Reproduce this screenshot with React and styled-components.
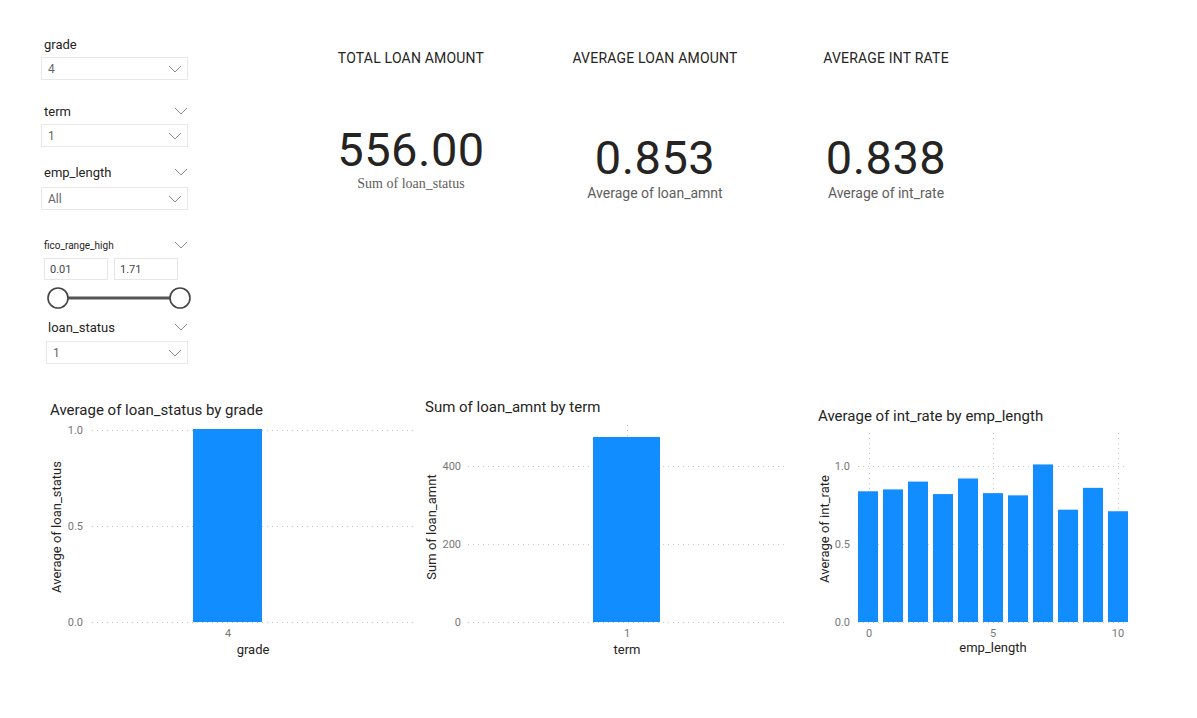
import React from 'react';
import styled, { createGlobalStyle } from 'styled-components';

const GlobalStyle = createGlobalStyle`
  body {
    margin: 0;
    background: #ffffff;
    font-family: Roboto, "Liberation Sans", sans-serif;
    color: #252423;
  }
`;

const Page = styled.div`
  width: 1197px;
  height: 718px;
  background: #ffffff;
  overflow: hidden;
`;

const TopSection = styled.div`
  display: flex;
  align-items: flex-start;
  height: 398px;
`;

const SlicerColumn = styled.div`
  display: flex;
  flex-direction: column;
  width: 150px;
  margin-left: 41px;
  padding-top: 35px;
`;

const SlicerGroup = styled.div`
  display: flex;
  flex-direction: column;
  margin-top: ${(p) => p.$gap || 0}px;
  padding-left: ${(p) => p.$indent || 0}px;
`;

const SlicerHeader = styled.div`
  display: flex;
  align-items: center;
  justify-content: space-between;
  height: 18px;
  padding-left: ${(p) => p.$pad ?? 3}px;
  padding-right: 3px;
  margin-bottom: ${(p) => p.$below ?? 4}px;
`;

const SlicerLabel = styled.span`
  font-size: ${(p) => (p.$small ? 10 : 13)}px;
  color: #252423;
`;

const Dropdown = styled.div`
  display: flex;
  align-items: center;
  justify-content: space-between;
  box-sizing: border-box;
  height: 23px;
  width: ${(p) => p.$width || 147}px;
  border: 1px solid #e8e8e8;
  padding: 0 5px 0 6px;
  font-size: 12px;
  color: #666666;
`;

const RangeInputs = styled.div`
  display: flex;
  gap: 6px;
  padding-left: 3px;
`;

const RangeBox = styled.div`
  box-sizing: border-box;
  width: 64px;
  height: 22px;
  border: 1px solid #e6e6e6;
  padding: 0 5px;
  display: flex;
  align-items: center;
  font-size: 11px;
  color: #444444;
`;

const SliderWrap = styled.div`
  margin-top: 6px;
  padding-left: 6px;
  height: 24px;
`;

const Cards = styled.div`
  display: grid;
  grid-template-columns: 244px 244px 218px;
  margin-left: 98px;
  padding-top: 48px;
`;

const Card = styled.div`
  display: flex;
  flex-direction: column;
  align-items: center;
`;

const CardTitle = styled.div`
  font-size: 14px;
  font-weight: 400;
  letter-spacing: 0.2px;
  line-height: 20px;
  color: #252423;
`;

const CardValue = styled.div`
  margin-top: ${(p) => (p.$wide ? 57 : 65)}px;
  font-size: 47px;
  line-height: 50px;
  letter-spacing: 0.5px;
  color: #252423;
  font-weight: 400;
`;

const CardSub = styled.div`
  margin-top: ${(p) => (p.$serif ? 0 : 1)}px;
  font-family: ${(p) => (p.$serif ? '"Liberation Serif", serif' : 'Roboto, "Liberation Sans", sans-serif')};
  font-size: 14px;
  line-height: 18px;
  color: #605e5c;
`;

const ChartsRow = styled.div`
  display: flex;
  align-items: flex-end;
  margin-left: 45px;
  height: 262px;
`;

const ChartPanel = styled.div`
  display: flex;
  flex-direction: column;
  width: ${(p) => p.$width}px;
`;

const ChartTitle = styled.div`
  font-size: 15px;
  line-height: 20px;
  color: #252423;
  padding-left: ${(p) => p.$indent || 0}px;
  white-space: nowrap;
`;

const BLUE = '#118dff';
const GRID = '#c8c6c4';
const TICK = '#777777';

const Chevron = ({ color = '#8a8a8a' }) => (
  <svg width="14" height="8" viewBox="0 0 14 8">
    <path d="M1 1 L7 7 L13 1" fill="none" stroke={color} strokeWidth="1" />
  </svg>
);

const Slider = () => (
  <svg width="146" height="24" viewBox="0 0 146 24">
    <line x1="11" y1="12" x2="133" y2="12" stroke="#555" strokeWidth="3" />
    <circle cx="11" cy="12" r="10" fill="#fff" stroke="#444" strokeWidth="1.6" />
    <circle cx="133" cy="12" r="10" fill="#fff" stroke="#444" strokeWidth="1.6" />
  </svg>
);

const tickStyle = { fontFamily: 'Roboto, sans-serif', fontSize: 11, fill: TICK };
const axisStyle = { fontFamily: 'Roboto, sans-serif', fontSize: 13, fill: '#252423' };

const HGrid = ({ y, x1, x2 }) => (
  <line x1={x1} y1={y} x2={x2} y2={y} stroke={GRID} strokeWidth="1" strokeDasharray="1 4" />
);

const VGrid = ({ x, y1, y2 }) => (
  <line x1={x} y1={y1} x2={x} y2={y2} stroke={GRID} strokeWidth="1" strokeDasharray="1 4" />
);

const GradeChart = () => (
  <svg width="375" height="240" viewBox="0 0 375 240">
    {[['1.0', 10], ['0.5', 106], ['0.0', 202]].map(([t, y]) => (
      <g key={t}>
        <HGrid y={y + 0.5} x1={47} x2={368} />
        <text x="38" y={y + 4} textAnchor="end" style={tickStyle}>{t}</text>
      </g>
    ))}
    <rect x="148" y="9" width="69" height="193" fill={BLUE} />
    <text x="183" y="217" textAnchor="middle" style={tickStyle}>4</text>
    <text x="208" y="234" textAnchor="middle" style={axisStyle}>grade</text>
    <text transform="translate(16 107) rotate(-90)" textAnchor="middle" style={axisStyle}>
      Average of loan_status
    </text>
  </svg>
);

const TermChart = () => (
  <svg width="380" height="243" viewBox="0 0 380 243">
    {[['400', 49], ['200', 127], ['0', 205]].map(([t, y]) => (
      <g key={t}>
        <HGrid y={y + 0.5} x1={48} x2={365} />
        <text x="41" y={y + 4} textAnchor="end" style={tickStyle}>{t}</text>
      </g>
    ))}
    <VGrid x={207.5} y1={8} y2={205} />
    <rect x="173" y="20" width="67" height="185" fill={BLUE} />
    <text x="207" y="220" textAnchor="middle" style={tickStyle}>1</text>
    <text x="207" y="237" textAnchor="middle" style={axisStyle}>term</text>
    <text transform="translate(16 110) rotate(-90)" textAnchor="middle" style={axisStyle}>
      Sum of loan_amnt
    </text>
  </svg>
);

const empValues = [0.838, 0.85, 0.9, 0.82, 0.92, 0.826, 0.812, 1.01, 0.72, 0.86, 0.71];

const EmpChart = () => (
  <svg width="345" height="234" viewBox="0 0 345 234">
    {[69, 193, 318].map((x) => (
      <VGrid key={x} x={x + 0.5} y1={7} y2={196} />
    ))}
    {[['1.0', 40], ['0.5', 118], ['0.0', 196]].map(([t, y]) => (
      <g key={t}>
        <HGrid y={y + 0.5} x1={58} x2={328} />
        <text x="50" y={y + 4} textAnchor="end" style={tickStyle}>{t}</text>
      </g>
    ))}
    {empValues.map((v, i) => {
      const h = v * 156;
      return <rect key={i} x={58 + i * 25} y={196 - h} width="20" height={h} fill={BLUE} />;
    })}
    {[['0', 69], ['5', 193], ['10', 318]].map(([t, x]) => (
      <text key={t} x={x} y="211" textAnchor="middle" style={tickStyle}>{t}</text>
    ))}
    <text x="193" y="226" textAnchor="middle" style={axisStyle}>emp_length</text>
    <text transform="translate(29 103) rotate(-90)" textAnchor="middle" style={axisStyle}>
      Average of int_rate
    </text>
  </svg>
);

const App = () => (
  <>
    <GlobalStyle />
    <Page>
      <TopSection>
        <SlicerColumn>
          <SlicerGroup>
            <SlicerHeader $below={4}>
              <SlicerLabel>grade</SlicerLabel>
            </SlicerHeader>
            <Dropdown>
              <span>4</span>
              <Chevron />
            </Dropdown>
          </SlicerGroup>

          <SlicerGroup $gap={22}>
            <SlicerHeader $pad={3} $below={4}>
              <SlicerLabel>term</SlicerLabel>
              <Chevron />
            </SlicerHeader>
            <Dropdown>
              <span>1</span>
              <Chevron />
            </Dropdown>
          </SlicerGroup>

          <SlicerGroup $gap={16}>
            <SlicerHeader $below={6}>
              <SlicerLabel>emp_length</SlicerLabel>
              <Chevron />
            </SlicerHeader>
            <Dropdown>
              <span>All</span>
              <Chevron />
            </Dropdown>
          </SlicerGroup>

          <SlicerGroup $gap={26}>
            <SlicerHeader $below={4}>
              <SlicerLabel $small>fico_range_high</SlicerLabel>
              <Chevron />
            </SlicerHeader>
            <RangeInputs>
              <RangeBox>0.01</RangeBox>
              <RangeBox>1.71</RangeBox>
            </RangeInputs>
            <SliderWrap>
              <Slider />
            </SliderWrap>
          </SlicerGroup>

          <SlicerGroup $gap={8} $indent={5}>
            <SlicerHeader $pad={2} $below={5}>
              <SlicerLabel>loan_status</SlicerLabel>
              <Chevron />
            </SlicerHeader>
            <Dropdown $width={142}>
              <span>1</span>
              <Chevron />
            </Dropdown>
          </SlicerGroup>
        </SlicerColumn>

        <Cards>
          <Card>
            <CardTitle>TOTAL LOAN AMOUNT</CardTitle>
            <CardValue $wide>556.00</CardValue>
            <CardSub $serif>Sum of loan_status</CardSub>
          </Card>
          <Card>
            <CardTitle>AVERAGE LOAN AMOUNT</CardTitle>
            <CardValue>0.853</CardValue>
            <CardSub>Average of loan_amnt</CardSub>
          </Card>
          <Card>
            <CardTitle>AVERAGE INT RATE</CardTitle>
            <CardValue>0.838</CardValue>
            <CardSub>Average of int_rate</CardSub>
          </Card>
        </Cards>
      </TopSection>

      <ChartsRow>
        <ChartPanel $width={375}>
          <ChartTitle $indent={5}>Average of loan_status by grade</ChartTitle>
          <GradeChart />
        </ChartPanel>
        <ChartPanel $width={380}>
          <ChartTitle $indent={5}>Sum of loan_amnt by term</ChartTitle>
          <TermChart />
        </ChartPanel>
        <ChartPanel $width={345}>
          <ChartTitle $indent={18}>Average of int_rate by emp_length</ChartTitle>
          <EmpChart />
        </ChartPanel>
      </ChartsRow>
    </Page>
  </>
);

export default App;
